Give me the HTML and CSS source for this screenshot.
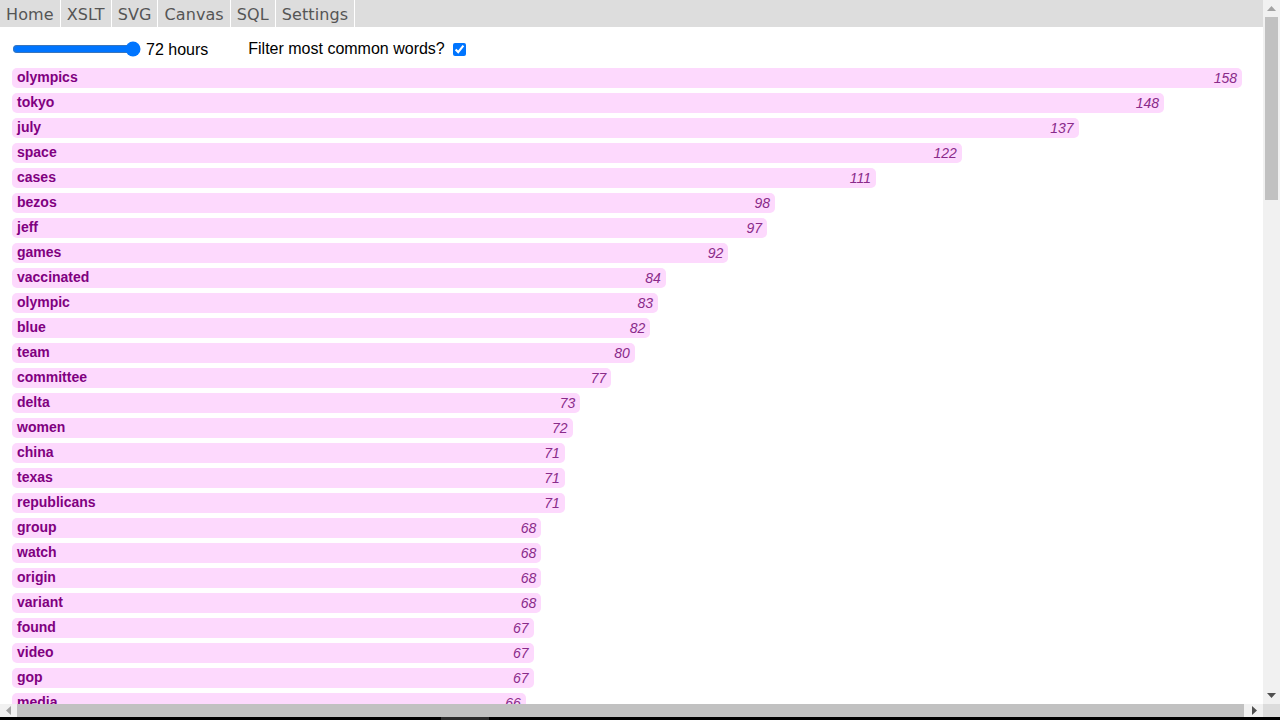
FILE: index.html
```html
<!DOCTYPE html>
<html lang="en">
<head>
<meta charset="utf-8">
<title>Word counts</title>
<link rel="stylesheet" href="styles.css">
</head>
<body>
<div class="frame">
<div class="page">
<nav class="tabs">
  <a class="tab" href="#">Home</a>
  <a class="tab" href="#">XSLT</a>
  <a class="tab" href="#">SVG</a>
  <a class="tab" href="#">Canvas</a>
  <a class="tab" href="#">SQL</a>
  <a class="tab" href="#">Settings</a>
</nav>
<main class="content">
  <div class="controls">
    <label class="range-wrap"><input class="range" type="range" min="1" max="72" value="72"><span class="range-label">72 hours</span></label>
    <label class="filter">Filter most common words? <input class="check" type="checkbox" checked></label>
  </div>
  <ol class="bars">
    <li class="bar" style="width:100%"><span class="word">olympics</span><span class="count">158</span></li>
    <li class="bar" style="width:93.67%"><span class="word">tokyo</span><span class="count">148</span></li>
    <li class="bar" style="width:86.71%"><span class="word">july</span><span class="count">137</span></li>
    <li class="bar" style="width:77.22%"><span class="word">space</span><span class="count">122</span></li>
    <li class="bar" style="width:70.25%"><span class="word">cases</span><span class="count">111</span></li>
    <li class="bar" style="width:62.03%"><span class="word">bezos</span><span class="count">98</span></li>
    <li class="bar" style="width:61.39%"><span class="word">jeff</span><span class="count">97</span></li>
    <li class="bar" style="width:58.23%"><span class="word">games</span><span class="count">92</span></li>
    <li class="bar" style="width:53.16%"><span class="word">vaccinated</span><span class="count">84</span></li>
    <li class="bar" style="width:52.53%"><span class="word">olympic</span><span class="count">83</span></li>
    <li class="bar" style="width:51.90%"><span class="word">blue</span><span class="count">82</span></li>
    <li class="bar" style="width:50.63%"><span class="word">team</span><span class="count">80</span></li>
    <li class="bar" style="width:48.73%"><span class="word">committee</span><span class="count">77</span></li>
    <li class="bar" style="width:46.20%"><span class="word">delta</span><span class="count">73</span></li>
    <li class="bar" style="width:45.57%"><span class="word">women</span><span class="count">72</span></li>
    <li class="bar" style="width:44.94%"><span class="word">china</span><span class="count">71</span></li>
    <li class="bar" style="width:44.94%"><span class="word">texas</span><span class="count">71</span></li>
    <li class="bar" style="width:44.94%"><span class="word">republicans</span><span class="count">71</span></li>
    <li class="bar" style="width:43.04%"><span class="word">group</span><span class="count">68</span></li>
    <li class="bar" style="width:43.04%"><span class="word">watch</span><span class="count">68</span></li>
    <li class="bar" style="width:43.04%"><span class="word">origin</span><span class="count">68</span></li>
    <li class="bar" style="width:43.04%"><span class="word">variant</span><span class="count">68</span></li>
    <li class="bar" style="width:42.41%"><span class="word">found</span><span class="count">67</span></li>
    <li class="bar" style="width:42.41%"><span class="word">video</span><span class="count">67</span></li>
    <li class="bar" style="width:42.41%"><span class="word">gop</span><span class="count">67</span></li>
    <li class="bar" style="width:41.77%"><span class="word">media</span><span class="count">66</span></li>
    <li class="bar" style="width:41.14%"><span class="word">covid</span><span class="count">65</span></li>
    <li class="bar" style="width:40.51%"><span class="word">gold</span><span class="count">64</span></li>
    <li class="bar" style="width:39.87%"><span class="word">trump</span><span class="count">63</span></li>
    <li class="bar" style="width:39.24%"><span class="word">medal</span><span class="count">62</span></li>
  </ol>
</main>
</div>
<div class="vscroll">
  <div class="sb-btn"><svg width="9" height="5" viewBox="0 0 9 5"><path d="M0 5 L4.5 0 L9 5 Z" fill="#a3a3a3"/></svg></div>
  <div class="vtrack"><div class="vthumb"></div></div>
  <div class="sb-btn"><svg width="9" height="5" viewBox="0 0 9 5"><path d="M0 0 L9 0 L4.5 5 Z" fill="#505050"/></svg></div>
</div>
<div class="hscroll">
  <div class="sb-btn hbtn"><svg width="5" height="9" viewBox="0 0 5 9"><path d="M5 0 L5 9 L0 4.5 Z" fill="#a3a3a3"/></svg></div>
  <div class="hthumb"></div>
  <div class="sb-btn hbtn"><svg width="5" height="9" viewBox="0 0 5 9"><path d="M0 0 L5 4.5 L0 9 Z" fill="#505050"/></svg></div>
</div>
<div class="corner"></div>
<div class="edge"><div class="edge-mark"></div></div>
</div>
</body>
</html>
```

FILE: styles.css
```css
html, body {
  margin: 0;
  padding: 0;
  background: #fff;
}

body {
  font-family: "Liberation Sans", Arial, sans-serif;
  font-size: 16px;
  color: #000;
  overflow: hidden;
}

.frame {
  display: grid;
  grid-template-columns: 1263px 17px;
  grid-template-rows: 704px 13px 3px;
  width: 1280px;
  height: 720px;
  overflow: hidden;
}

.page {
  overflow: hidden;
  background: #fff;
}

.tabs {
  display: flex;
  background: #dddddd;
  height: 27px;
}

.tab {
  display: block;
  padding: 1px 6px 0;
  height: 26px;
  line-height: 28px;
  font-family: "DejaVu Sans", Verdana, sans-serif;
  font-size: 16px;
  letter-spacing: 0.1px;
  color: #555555;
  text-decoration: none;
  border-right: 1px solid #ffffff;
}

.content {
  padding: 0 21px 0 12px;
}

.controls {
  display: flex;
  align-items: center;
  gap: 40px;
  height: 30px;
  margin-top: 7px;
  margin-bottom: 4px;
}

.range-wrap {
  display: flex;
  align-items: center;
}

.range {
  width: 129px;
  margin: 0;
  accent-color: #0075ff;
}

.range-label {
  margin-left: 5px;
  position: relative;
  top: 1px;
}

.filter {
  display: flex;
  align-items: center;
  gap: 3px;
}

.check {
  width: 13px;
  height: 13px;
  margin: 0 0 0 5px;
  accent-color: #0075ff;
}

.bars {
  list-style: none;
  margin: 0;
  padding: 0;
  display: flex;
  flex-direction: column;
  gap: 5px;
}

.bar {
  display: flex;
  justify-content: space-between;
  align-items: center;
  box-sizing: border-box;
  height: 20px;
  padding: 0 5px;
  background: #fdd9fd;
  border-radius: 5px;
  font-size: 14px;
}

.word {
  font-weight: bold;
  color: #800080;
  position: relative;
  top: -1px;
}

.count {
  font-style: italic;
  color: #8a2b8a;
}

/* simulated browser scrollbars */
.vscroll {
  display: flex;
  flex-direction: column;
  background: #f1f1f1;
}

.sb-btn {
  flex: 0 0 17px;
  display: flex;
  align-items: center;
  justify-content: center;
}

.vtrack {
  flex: 1;
  padding: 0 2px;
}

.vthumb {
  height: 183px;
  background: #c1c1c1;
}

.hscroll {
  display: flex;
  background: #f1f1f1;
}

.hbtn {
  flex: 0 0 17px;
}

.hthumb {
  flex: 1;
  background: #c1c1c1;
  margin-right: 2px;
}

.corner {
  background: #dcdcdc;
}

.edge {
  grid-column: 1 / 3;
  background: #000;
  padding-left: 441px;
}

.edge-mark {
  width: 48px;
  height: 3px;
  background: #2b2b2b;
}
```
